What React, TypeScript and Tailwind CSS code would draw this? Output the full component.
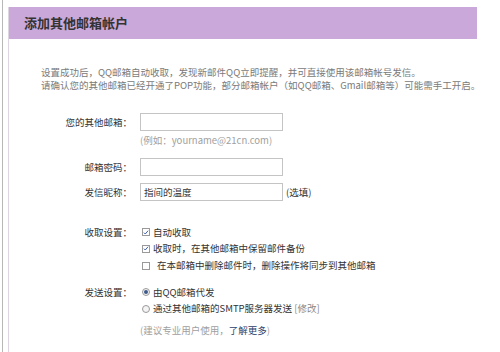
import * as React from "react";

const font = { fontFamily: '"Noto Sans CJK SC", "Noto Sans", sans-serif' };

// 复选框
const Check: React.FC<{ checked?: boolean }> = ({ checked }) => (
  <span className="flex h-[8px] w-[8px] shrink-0 items-center justify-center border border-[#9a9a9a] bg-white">
    {checked && (
      <svg viewBox="0 0 8 8" className="h-[7px] w-[7px]">
        <path d="M1.2 4.2 L3 6 L6.8 1.6" fill="none" stroke="#3b5aa8" strokeWidth="1.3" />
      </svg>
    )}
  </span>
);

// 单选框
const Radio: React.FC<{ checked?: boolean }> = ({ checked }) => (
  <span className="flex h-[8px] w-[8px] shrink-0 items-center justify-center rounded-full border border-[#9a9a9a] bg-[#f4f4f4]">
    {checked && <span className="h-[4px] w-[4px] rounded-full bg-[#3d5a8c]" />}
  </span>
);

const Label: React.FC<{ children: React.ReactNode }> = ({ children }) => (
  <div className="w-[124px] shrink-0 pr-[1px] text-right text-[#333]">{children}</div>
);

const Input: React.FC<{ value?: string }> = ({ value }) => (
  <div className="flex h-[18px] w-[143px] items-center border border-[#c4c4c4] bg-white px-[3px] text-[#333]">
    {value}
  </div>
);

export default function App() {
  return (
    <div className="flex h-[352px] w-[500px] bg-white text-[9.5px]" style={font}>
      <div className="ml-[2px] w-[6px] border-l border-[#b8b8b8]" />
      <div className="mt-[7px] flex w-[469px] flex-col border-l border-[#ddd6e2]">
        <div className="flex h-[32px] items-center bg-[#caa9da] pl-[15px] text-[13px] font-bold text-[#333]">
          添加其他邮箱帐户
        </div>

        <div className="mt-[27px] whitespace-nowrap pl-[32px] leading-[13px] text-[#7a7a7a]">
          <p>设置成功后，QQ邮箱自动收取，发现新邮件QQ立即提醒，并可直接使用该邮箱帐号发信。</p>
          <p>请确认您的其他邮箱已经开通了POP功能，部分邮箱帐户（如QQ邮箱、Gmail邮箱等）可能需手工开启。</p>
        </div>

        <div className="mt-[21px] flex items-center gap-[7px]">
          <Label>您的其他邮箱：</Label>
          <Input />
        </div>
        <div className="mt-[3px] flex h-[12px] items-center pl-[131px] text-[#a0a0a0]">
          (例如：yourname@21cn.com)
        </div>

        <div className="mt-[12px] flex items-center gap-[7px]">
          <Label>邮箱密码：</Label>
          <Input />
        </div>

        <div className="mt-[7px] flex items-center gap-[7px]">
          <Label>发信昵称：</Label>
          <Input value="指间的温度" />
          <span className="-ml-[4px] text-[#333]">(选填)</span>
        </div>

        <div className="mt-[23px] flex h-[16px] items-center gap-[7px]">
          <Label>收取设置：</Label>
          <div className="flex items-center gap-[3px] pl-[2px] text-[#333]">
            <Check checked />
            <span>自动收取</span>
          </div>
        </div>
        <div className="flex h-[17px] items-center gap-[3px] pl-[133px] text-[#333]">
          <Check checked />
          <span>收取时，在其他邮箱中保留邮件备份</span>
        </div>
        <div className="flex h-[17px] items-center gap-[7px] pl-[133px] text-[#333]">
          <Check />
          <span>在本邮箱中删除邮件时，删除操作将同步到其他邮箱</span>
        </div>

        <div className="mt-[10px] flex h-[16px] items-center gap-[7px]">
          <Label>发送设置：</Label>
          <div className="flex items-center gap-[3px] pl-[2px] text-[#333]">
            <Radio checked />
            <span>由QQ邮箱代发</span>
          </div>
        </div>
        <div className="flex h-[17px] items-center gap-[3px] pl-[133px] text-[#333]">
          <Radio />
          <span>
            通过其他邮箱的SMTP服务器发送 <span className="text-[#888]">[修改]</span>
          </span>
        </div>
        <div className="mt-[6px] flex h-[14px] items-center pl-[131px] text-[#a0a0a0]">
          (建议专业用户使用，<span className="text-[#2b3f6b]">了解更多</span>)
        </div>
      </div>
    </div>
  );
}
